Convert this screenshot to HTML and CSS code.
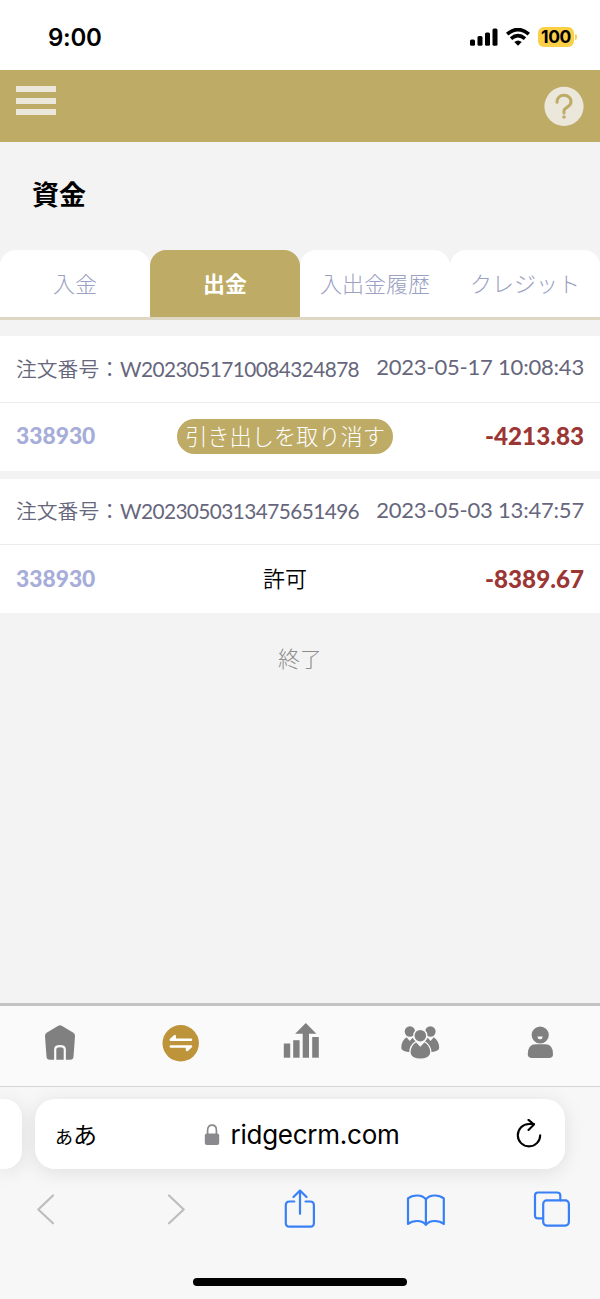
FILE: index.html
```
<!DOCTYPE html>
<html lang="ja">
<head>
    <meta charset="UTF-8">
    <meta name="viewport" content="width=device-width, initial-scale=1.0">
    <title>資金</title>
    <link rel="stylesheet" href="styles.css">
</head>
<body>
    <div class="status-bar">
        <span class="time">9:00</span>
        <div class="status-icons">
            <svg width="28" height="18" viewBox="0 0 28 18">
                <rect x="0" y="11.5" width="5" height="6.3" rx="1.5"/>
                <rect x="7.5" y="8" width="5" height="9.8" rx="1.5"/>
                <rect x="15" y="4.5" width="5" height="13.3" rx="1.5"/>
                <rect x="22.5" y="0.5" width="5" height="17.3" rx="1.5"/>
            </svg>
            <svg class="wifi" width="24" height="18" viewBox="0 0 24 18">
                <path d="M1.2 6.2Q12-3 22.8 6.2" fill="none" stroke="#000" stroke-width="3.7"/>
                <path d="M5 10.6Q12 4.6 19 10.6" fill="none" stroke="#000" stroke-width="3.5"/>
                <path d="M8.3 14.1Q12 10.7 15.7 14.1L12 17.8Z"/>
            </svg>
            <span class="battery">100</span>
            <span class="battery-cap"></span>
        </div>
    </div>

    <header class="header">
        <div class="menu"><i></i><i></i><i></i></div>
        <svg class="help" width="40" height="40" viewBox="0 0 40 40">
            <circle cx="20" cy="20.4" r="19.6" fill="#ebe7da"/>
            <path d="M13 16.2C13 11.6 16 9.2 20 9.2C24.2 9.2 27 12.2 27 15.8C27 21.6 20 21 20 25V27" fill="none" stroke="#beab66" stroke-width="3" stroke-linecap="round"/>
            <circle cx="20" cy="31" r="1.8" fill="#beab66"/>
        </svg>
    </header>

    <main class="content">
        <h1>資金</h1>
        <nav class="tabs">
            <a class="tab">入金</a>
            <a class="tab active">出金</a>
            <a class="tab">入出金履歴</a>
            <a class="tab">クレジット</a>
        </nav>
        <section class="order">
            <div class="order-head">
                <span class="order-no">注文番号：<span class="number">W2023051710084324878</span></span>
                <span class="date">2023-05-17 10:08:43</span>
            </div>
            <div class="order-body">
                <span class="account">338930</span>
                <button class="cancel">引き出しを取り消す</button>
                <span class="amount">-4213.83</span>
            </div>
        </section>
        <section class="order">
            <div class="order-head">
                <span class="order-no">注文番号：<span class="number">W2023050313475651496</span></span>
                <span class="date">2023-05-03 13:47:57</span>
            </div>
            <div class="order-body">
                <span class="account">338930</span>
                <span class="state">許可</span>
                <span class="amount">-8389.67</span>
            </div>
        </section>
        <p class="end">終了</p>
    </main>

    <nav class="bottom-nav">
        <a><svg width="40" height="40" viewBox="0 0 40 40">
            <path d="M18.3 2.8Q20 1.8 21.7 2.8L33 9.6Q35.2 11 35 13.2L33.5 33.8Q33.2 36.8 30.2 36.8H9.8Q6.8 36.8 6.5 33.8L5 13.2Q4.8 11 7 9.6Z" fill="#808080"/>
            <path d="M15.2 37.5V26.5Q15.2 23.2 20 23.2Q24.8 23.2 24.8 26.5V37.5" fill="none" stroke="#fafafa" stroke-width="2.2"/>
        </svg></a>
        <a><svg width="40" height="40" viewBox="0 0 40 40">
            <circle cx="20.7" cy="20.3" r="18.2" fill="#be943a"/>
            <path d="M31 16.8H10.8L14.8 13.2V16.8M10.8 23.4H31L27 27V23.4" fill="#fff" stroke="#fff" stroke-width="2.5" stroke-linecap="round" stroke-linejoin="round"/>
        </svg></a>
        <a><svg width="40" height="40" viewBox="0 0 40 40" fill="#808080">
            <rect x="3.8" y="20.5" width="6.4" height="14.2"/>
            <rect x="13.2" y="17.2" width="6.4" height="17.5"/>
            <path d="M22.7 34.7V10.7H15.2L25.8 0L36.4 10.7H29V34.7Z"/>
            <rect x="32.2" y="14" width="6.6" height="20.7"/>
        </svg></a>
        <a><svg width="40" height="40" viewBox="0 0 40 40" fill="#808080">
            <circle cx="9.9" cy="8.5" r="5.2"/>
            <circle cx="30.4" cy="8.5" r="5.2"/>
            <path d="M6.5 14.2L9.8 18L12.5 14.8L17 20L11 29.5C4 28.4 1.3 27.5 1.3 24.5C1.3 20.5 3 16.6 6.5 14.2Z"/>
            <path d="M33.8 14.2L30.5 18L27.8 14.8L23.3 20L29.3 29.5C36.3 28.4 39.2 27.5 39.2 24.5C39.2 20.5 37.3 16.6 33.8 14.2Z"/>
            <g stroke="#fafafa" stroke-width="1.4">
                <path d="M16.2 18.5L20.3 22.8L24.4 18.5C28 20.5 30.9 25 30.9 29.5C30.9 33.8 26 36.3 20.3 36.3C14.6 36.3 9.9 33.8 9.9 29.5C9.9 25 12.6 20.5 16.2 18.5Z"/>
                <circle cx="20.3" cy="12.7" r="6.5"/>
            </g>
        </svg></a>
        <a><svg width="40" height="40" viewBox="0 0 40 40">
            <circle cx="20.2" cy="12" r="8.6" fill="#808080"/>
            <path d="M17.4 13.5H22.8Q22.5 16.2 20.1 16.2Q17.7 16.2 17.4 13.5Z" fill="#fafafa"/>
            <path d="M15.8 21.3H25.2Q33 21.3 33 31.2Q33 35 29 35H11.8Q7.8 35 7.8 31.2Q7.8 21.3 15.8 21.3Z" fill="#808080"/>
        </svg></a>
    </nav>

    <footer class="browser">
        <div class="address-row">
            <div class="prev-tab"></div>
            <div class="address">
                <span class="translate"><small>あ</small>あ</span>
                <div class="site">
                    <svg width="16" height="22" viewBox="0 0 16 22">
                        <path d="M3.6 10V6.2C3.6 2.8 5.5 1.2 8 1.2C10.5 1.2 12.4 2.8 12.4 6.2V10" fill="none" stroke="#89898e" stroke-width="1.7"/>
                        <rect x="0.8" y="9.6" width="14.4" height="11.3" rx="2" fill="#89898e"/>
                    </svg>
                    <span class="domain">ridgecrm.com</span>
                </div>
                <svg class="reload" width="26" height="30" viewBox="0 0 26 30">
                    <path d="M24.2 16.2A11.2 11.2 0 1 1 13 5H18" fill="none" stroke="#000" stroke-width="2.1" stroke-linecap="round"/>
                    <path d="M12.5 0.9L18 5.6L12.5 11" fill="none" stroke="#000" stroke-width="2.1" stroke-linecap="round" stroke-linejoin="round"/>
                </svg>
            </div>
        </div>
        <div class="toolbar">
            <svg width="40" height="40" viewBox="0 0 40 40"><path class="off" d="M27 6.5L12.3 20.5L27 34.3"/></svg>
            <svg width="40" height="40" viewBox="0 0 40 40"><path class="off" d="M16 6.5L30.7 20.5L16 34.3"/></svg>
            <svg width="40" height="40" viewBox="0 0 40 40"><path d="M15.3 12.5H10.5Q6.8 12.5 6.8 16.2V33.9Q6.8 37.6 10.5 37.6H31.2Q34.9 37.6 34.9 33.9V16.2Q34.9 12.5 31.2 12.5H26.5M21 24.8V1.7M14.5 8L21 1.5L27.5 8"/></svg>
            <svg width="40" height="40" viewBox="0 0 40 40"><path d="M19.9 10.2C16 5.4 7 5.4 2 9.4V35C7 31 16 30.8 19.9 35.8C23.8 30.8 32.8 31 37.8 35V9.4C32.8 5.4 23.8 5.4 19.9 10.2V35"/></svg>
            <svg width="40" height="40" viewBox="0 0 40 40"><path d="M10.5 29.4H6Q3 29.4 3 26.4V6.5Q3 3.5 6 3.5H25Q28.3 3.5 28.3 6.5V11.3"/><rect x="11.2" y="11.4" width="25.7" height="25.2" rx="3.5"/></svg>
        </div>
        <div class="home-bar"></div>
    </footer>
</body>
</html>
```
FILE: styles.css
```
* { box-sizing: border-box; }
body { margin: 0; width: 600px; height: 1299px; display: flex; flex-direction: column; overflow: hidden; background: #f3f3f3; color: #000; font-family: Lato, "Noto Sans CJK JP", sans-serif; }
svg { display: block; flex-shrink: 0; }

.status-bar { height: 70px; flex-shrink: 0; display: flex; justify-content: space-between; align-items: center; padding: 4px 23px 0 48px; background: #fff; font-family: Inter, sans-serif; }
.time { font-size: 24px; font-weight: 600; letter-spacing: -0.3px; }
.status-icons { display: flex; align-items: center; }
.wifi { margin: 0 8px; }
.battery { width: 36px; height: 20px; border-radius: 6px; background: #fbd047; font-size: 17.5px; font-weight: 700; letter-spacing: -0.4px; line-height: 20px; text-align: center; }
.battery-cap { width: 2px; height: 6px; margin-left: 1px; border-radius: 0 3px 3px 0; background: #fbd047; }

.header { height: 72px; flex-shrink: 0; display: flex; justify-content: space-between; align-items: flex-start; padding: 16px; background: #beab66; }
.menu { width: 40px; display: flex; flex-direction: column; gap: 5.5px; }
.menu i { height: 6px; background: #ebe7da; }

.content { flex: 1; }
h1 { margin: 0; height: 107.5px; padding: 33px 32px 0; font-size: 27px; font-weight: 700; line-height: 40px; }
.tabs { display: grid; grid-template-columns: repeat(4, 150px); height: 70.5px; margin-bottom: 16px; border-bottom: 3px solid #ded7c3; }
.tab { border-radius: 16px 16px 0 0; background: #fff; color: #9aa1c2; font-size: 22px; font-weight: 300; line-height: 67.5px; text-align: center; }
.tab.active { background: #beab66; color: #fff; font-weight: 700; }

.order { margin-bottom: 8px; background: #fff; }
.order-head { height: 66.5px; display: flex; justify-content: space-between; align-items: center; padding: 0 16px 2px; border-bottom: 1.5px solid #ececec; color: #66667c; white-space: nowrap; }
.order-no { font-size: 20.8px; font-weight: 350; }
.number { font-weight: 400; letter-spacing: -0.58px; }
.date { padding-bottom: 2px; font-size: 22px; letter-spacing: -0.2px; }
.order-body { height: 68px; display: grid; grid-template-columns: 120px 1fr 150px; align-items: center; padding: 0 16px 1px; }
.account { padding-bottom: 2px; color: #a7add9; font-size: 22.8px; font-weight: 900; }
.cancel { justify-self: center; height: 35px; padding: 0 8px; border: none; border-radius: 18px; background: #beab66; color: #fff; font-family: inherit; font-size: 22.2px; font-weight: 300; line-height: 35px; white-space: nowrap; }
.state { padding-bottom: 4px; font-size: 22px; font-weight: 350; text-align: center; }
.amount { padding-bottom: 1px; color: #9c3634; font-size: 24.2px; font-weight: 900; text-align: right; }
.end { margin: 29px 0 0; color: #8c8c8c; font-size: 22px; font-weight: 300; line-height: 34px; text-align: center; }

.bottom-nav { height: 83px; flex-shrink: 0; display: grid; grid-template-columns: repeat(5, 1fr); justify-items: center; padding-top: 17px; border-top: 3px solid #c3c3c3; background: #fafafa; }

.browser { height: 213px; flex-shrink: 0; border-top: 1px solid #d4d6d5; background: #f7f7f7; }
.address-row { display: flex; gap: 13px; padding-top: 12px; }
.prev-tab { width: 22px; height: 70px; border-radius: 0 18px 18px 0; background: #fff; box-shadow: 0 3px 20px rgba(0, 0, 0, 0.1); }
.address { width: 530px; height: 70px; display: flex; justify-content: space-between; align-items: center; padding: 0 23px 0 20px; border-radius: 20px; background: #fff; box-shadow: 0 3px 20px rgba(0, 0, 0, 0.1); }
.translate { width: 33px; padding-bottom: 2px; font-family: "Noto Sans CJK JP", sans-serif; font-size: 24px; font-weight: 400; white-space: nowrap; }
.translate small { font-size: 18px; }
.site { display: flex; align-items: center; gap: 10px; padding-top: 1px; }
.domain { font-family: Inter, sans-serif; font-size: 26px; letter-spacing: -0.25px; }
.toolbar { display: flex; justify-content: space-between; padding: 20px 28px 0 26px; }
.toolbar path, .toolbar rect { fill: none; stroke: #3880f8; stroke-width: 2.2; stroke-linecap: round; stroke-linejoin: round; }
.toolbar .off { stroke: #bdbdbd; }
.home-bar { width: 214px; height: 8px; margin: 49px auto 0; border-radius: 4px; background: #000; }
```
